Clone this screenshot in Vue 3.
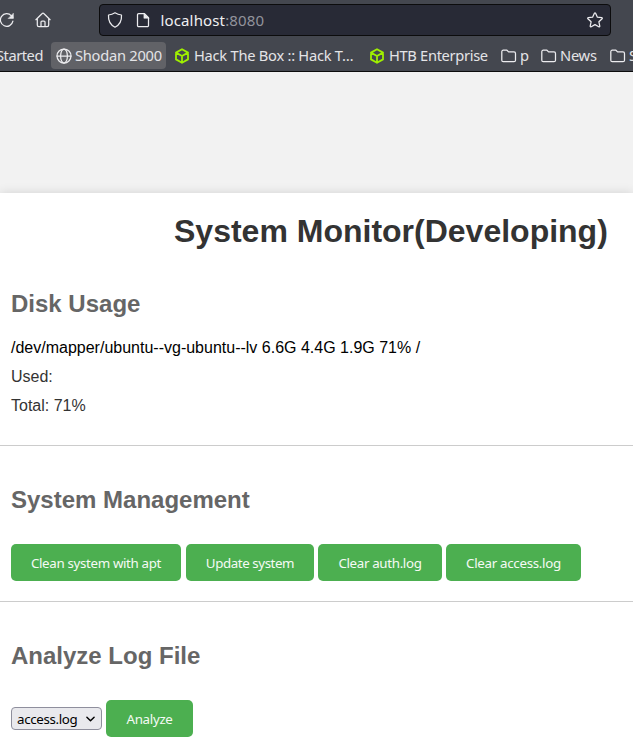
<script setup>
const bookmarks = [
  { label: 'Started', icon: '', kind: 'started' },
  { label: 'Shodan 2000', icon: 'globe', kind: 'shodan' },
  { label: 'Hack The Box :: Hack T…', icon: 'cube', kind: 'htb' },
  { label: 'HTB Enterprise', icon: 'cube', kind: 'enterprise' },
  { label: 'p', icon: 'folder', kind: 'p' },
  { label: 'News', icon: 'folder', kind: 'news' },
  { label: 'S', icon: 'folder', kind: 'last' },
]
const actions = [
  { label: 'Clean system with apt', kind: 'clean' },
  { label: 'Update system', kind: 'update' },
  { label: 'Clear auth.log', kind: 'auth' },
  { label: 'Clear access.log', kind: 'access' },
]
</script>

<template>
  <div class="window">
    <header class="chrome">
      <div class="toolbar">
        <svg class="icon reload" viewBox="0 0 16 16"><path d="M13.9 9.2A6.3 6.3 0 1 1 12.4 3.8L13.8 5.2"/><path d="M14.4 1.5v5H9.4Z" class="solid"/></svg>
        <svg class="icon home" viewBox="0 0 16 16"><path d="M.9 7.7 7.2 1.5a1.1 1.1 0 0 1 1.6 0l6.3 6.2M2.3 6.7V13a1.6 1.6 0 0 0 1.6 1.6h8.2a1.6 1.6 0 0 0 1.6-1.6V6.7M6 14.4V10a1 1 0 0 1 1-1h2a1 1 0 0 1 1 1v4.4"/></svg>
        <div class="address">
          <svg class="icon shield" viewBox="0 0 16 16"><path d="M8 .8c2 1.3 4.2 2 6.5 2.2.4 5.8-1.6 9.7-6.5 12.2C3.1 12.7 1.1 8.8 1.5 3 3.8 2.8 6 2.1 8 .8Z"/></svg>
          <svg class="icon page" viewBox="0 0 16 16"><path d="M3.7 1.7h5.8l4 4v7.8a1.2 1.2 0 0 1-1.2 1.2H3.7a1.2 1.2 0 0 1-1.2-1.2V2.9a1.2 1.2 0 0 1 1.2-1.2Z"/><path d="M8.9 1.500v4.800h4.900Z" class="solid"/></svg>
          <span class="url">localhost<span class="port">:8080</span></span>
          <svg class="icon star" viewBox="0 0 16 16"><path d="M7.4 1.2a.7.7 0 0 1 1.2 0l1.8 4 4.3.5c.6.1.8.7.4 1.1l-3.2 3 .9 4.3c.1.6-.5 1-1 .7L8 12.6l-3.8 2.2c-.5.3-1.1-.1-1-.7l.9-4.3-3.2-3c-.4-.4-.2-1 .4-1.1l4.3-.5Z"/></svg>
        </div>
      </div>
      <nav class="bookmarks">
        <div v-for="b in bookmarks" :key="b.kind" class="bookmark" :class="b.kind">
          <svg v-if="b.icon === 'globe'" class="icon" viewBox="0 0 16 16"><circle cx="8" cy="8" r="7"/><ellipse cx="8" cy="8" rx="3.4" ry="7"/><path d="M1 8h14"/></svg>
          <svg v-else-if="b.icon === 'cube'" class="icon cube" viewBox="0 0 16 16"><path d="m8 1.2 6 3.4v6.8l-6 3.400-6-3.400V4.600ZM2 4.600 8 8l6-3.400M8 8v6.800"/></svg>
          <svg v-else-if="b.icon === 'folder'" class="icon" viewBox="0 0 16 16"><path d="M2.3 2.2h3.6l1.7 1.7h5.4a1.5 1.5 0 0 1 1.5 1.5v6.8a1.5 1.5 0 0 1-1.5 1.5H2.3a1.5 1.5 0 0 1-1.5-1.5V3.7a1.5 1.5 0 0 1 1.5-1.5Z"/></svg>
          <span>{{ b.label }}</span>
        </div>
      </nav>
    </header>
    <main class="page-area">
      <div class="card">
        <h1>System Monitor(Developing)</h1>
        <section class="disk">
          <h2>Disk Usage</h2>
          <div class="device">/dev/mapper/ubuntu--vg-ubuntu--lv 6.6G 4.4G 1.9G 71% /</div>
          <p>Used:</p>
          <p>Total: 71%</p>
        </section>
        <section class="management">
          <h2>System Management</h2>
          <div class="actions">
            <button v-for="a in actions" :key="a.kind" :class="a.kind">{{ a.label }}</button>
          </div>
        </section>
        <section class="analyze">
          <h2>Analyze Log File</h2>
          <div class="actions">
            <div class="select" role="combobox"><span>access.log</span><svg viewBox="0 0 10 6"><path d="m1 1 4 4 4-4"/></svg></div>
            <button class="run">Analyze</button>
          </div>
        </section>
      </div>
    </main>
  </div>
</template>

<style>
body { margin: 0; overflow: hidden; }
</style>

<style scoped>
* { box-sizing: border-box; }
.window { width: 633px; height: 740px; overflow: hidden; background: #f2f2f2; font-family: "Liberation Sans", Arial, sans-serif; }
.chrome { height: 72px; background: #44474f; border-bottom: 1px solid #0c0c0d; color: #e4e4e7; font-family: "Noto Sans", sans-serif; overflow: hidden; }
.icon { width: 16px; height: 16px; flex: none; fill: none; stroke: #ececef; stroke-width: 1.25; stroke-linecap: round; stroke-linejoin: round; overflow: visible; }
.icon .solid { fill: #ececef; stroke-width: .5; }
.toolbar { display: flex; align-items: center; height: 40px; }
.reload { margin-left: -1px; }
.home { margin-left: 19.5px; }
.address { display: flex; align-items: center; width: 512px; height: 32px; margin-left: 48.5px; padding: 0 7px; background: #282a36; border: 1px solid #0c0c0d; border-radius: 4px; }
.page { margin-left: 12px; }
.url { margin-left: 9.5px; white-space: nowrap; font-size: 15px; letter-spacing: .14px; line-height: 20px; color: #f0f0f2; }
.port { color: #92939c; }
.star { margin-left: auto; }
.bookmarks { display: flex; height: 31px; align-items: center; }
.bookmark { display: flex; flex: none; align-items: center; height: 27px; gap: 3px; white-space: nowrap; font-size: 14.67px; letter-spacing: -.25px; line-height: 20px; }
.bookmark span { margin-top: -1px; }
.started { width: 51px; justify-content: flex-end; padding-right: 8px; letter-spacing: -.45px; }
.shodan { width: 115px; padding-left: 5px; background: #616267; border-radius: 4px; }
.htb { width: 195px; padding-left: 8px; gap: 4px; }
.enterprise { width: 132px; padding-left: 8px; gap: 4px; letter-spacing: -.32px; }
.p { width: 40px; padding-left: 8px; }
.news { width: 69px; padding-left: 8px; }
.last { padding-left: 8px; }
.cube { stroke: #9fef00; stroke-width: 1.8; }
.page-area { height: 668px; padding-top: 121px; background: #f2f2f2; }
.card { height: 600px; background: #fff; box-shadow: 0 0 10px rgba(0, 0, 0, .13); overflow: hidden; }
h1 { width: 434px; margin: 20px 0 0 174px; color: #333; font-size: 32px; line-height: 37px; white-space: nowrap; }
h2 { margin: 0; color: #666; font-size: 24px; line-height: 28px; }
section { padding-left: 11px; border-bottom: 1px solid #ccc; }
.disk { height: 196px; padding-top: 40px; }
.device { margin-top: 21px; color: #000; font-size: 16px; line-height: 18px; }
p { margin: 11px 0 0; color: #333; font-size: 16px; line-height: 18px; }
.management { height: 156px; padding-top: 40px; }
.analyze { padding-top: 40px; border-bottom: 0; }
.actions { display: flex; align-items: center; margin-top: 30px; gap: 4px; }
button { height: 37px; padding: 1px 0 0; border: 0; border-radius: 5px; background: #4caf50; color: #f5faf5; font: 13.333px/18px "Noto Sans", sans-serif; letter-spacing: -.34px; text-align: center; white-space: nowrap; }
.clean { width: 170px; margin-right: 1px; }
.update { width: 128px; letter-spacing: -.42px; }
.auth { width: 124px; }
.access { width: 135px; letter-spacing: -.3px; }
.run { width: 87px; letter-spacing: -.3px; }
.select { display: flex; align-items: center; justify-content: space-between; width: 91px; height: 23px; padding: 1px 6px 0 5px; border: 1px solid #8f8f9d; border-radius: 4px; background: #e9e9ed; color: #000; font: 13.333px/18px "Noto Sans", sans-serif; letter-spacing: -.34px; }
.select svg { width: 9px; height: 6px; overflow: visible; fill: none; stroke: #000; stroke-width: 1.6; stroke-linecap: round; stroke-linejoin: round; }
</style>
